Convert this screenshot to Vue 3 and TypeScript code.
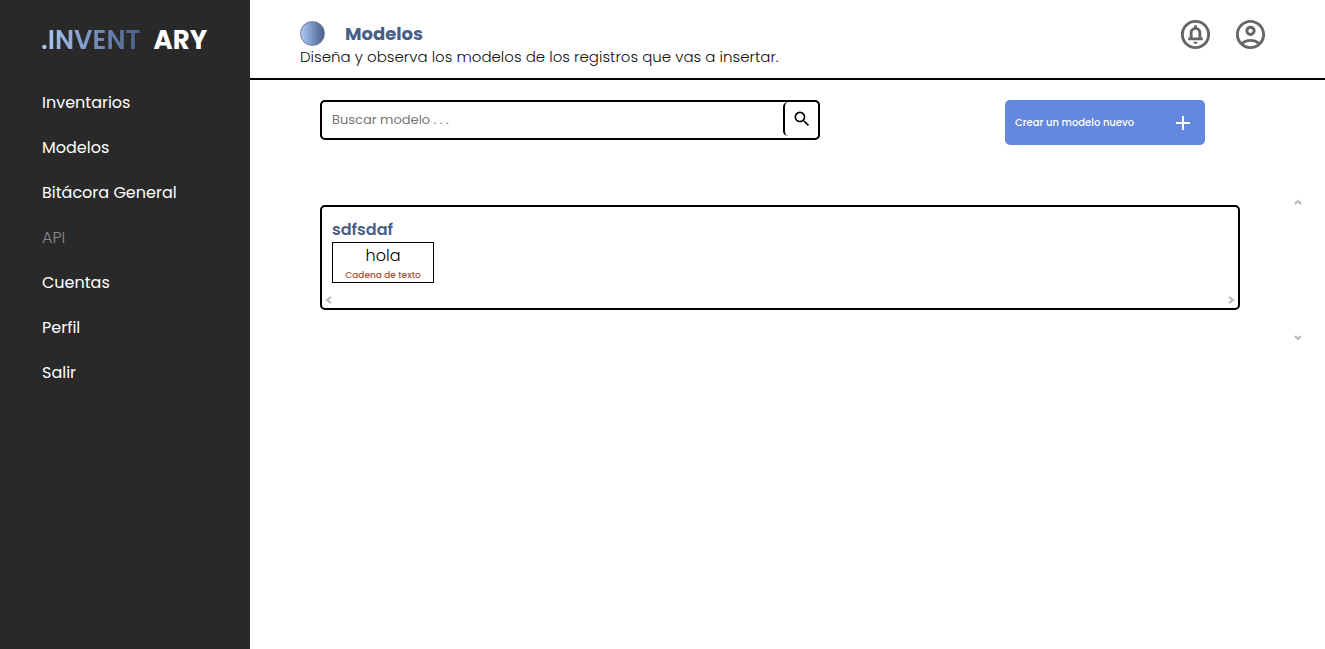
<script setup lang="ts">
import { ref } from 'vue'

interface NavItem {
  label: string
  disabled?: boolean
}

interface Field {
  name: string
  type: string
}

interface Model {
  name: string
  fields: Field[]
}

const navItems: NavItem[] = [
  { label: 'Inventarios' },
  { label: 'Modelos' },
  { label: 'Bitácora General' },
  { label: 'API', disabled: true },
  { label: 'Cuentas' },
  { label: 'Perfil' },
  { label: 'Salir' },
]

const models: Model[] = [
  { name: 'sdfsdaf', fields: [{ name: 'hola', type: 'Cadena de texto' }] },
]

const query = ref('')
</script>

<template>
  <div class="app">
    <aside class="sidebar">
      <div class="brand">
        <span class="brand-main">.INVENT</span>
        <span class="brand-end">ARY</span>
      </div>
      <nav class="nav">
        <a
          v-for="item in navItems"
          :key="item.label"
          href="#"
          class="nav-link"
          :class="{ disabled: item.disabled }"
          :aria-disabled="item.disabled"
        >{{ item.label }}</a>
      </nav>
    </aside>

    <main class="main">
      <header class="header">
        <div class="heading">
          <div class="title-row">
            <span class="dot"></span>
            <h1 class="title">Modelos</h1>
          </div>
          <p class="subtitle">Diseña y observa los modelos de los registros que vas a insertar.</p>
        </div>
        <div class="actions">
          <button class="icon-button" type="button" aria-label="Notificaciones">
            <svg viewBox="0 0 24 24" width="35" height="35">
              <circle cx="12" cy="12" r="9" fill="none" stroke="currentColor" stroke-width="2" />
              <path
                fill="currentColor"
                fill-rule="evenodd"
                d="M12 5.500c-.6 0-1 .4-1 1v.6C9 7.500 8 9 8 11v3H7v2h10v-2h-1v-3c0-2-1-3.500-3-3.900v-.6c0-.6-.4-1-1-1zM10 14v-3c0-1.400.8-2.200 2-2.200s2 .8 2 2.200v3zM10.500 17h3c0 .83-.67 1.500-1.500 1.500s-1.500-.67-1.500-1.500z"
              />
            </svg>
          </button>
          <button class="icon-button" type="button" aria-label="Perfil de usuario">
            <svg viewBox="0 0 24 24" width="35" height="35">
              <path
                fill="currentColor"
                d="M12 2C6.480 2 2 6.480 2 12s4.480 10 10 10 10-4.480 10-10S17.520 2 12 2zM7.350 18.500C8.660 17.560 10.260 17 12 17s3.340.56 4.650 1.500c-1.310.94-2.910 1.500-4.650 1.500s-3.340-.56-4.650-1.500zm10.790-1.380C16.450 15.800 14.320 15 12 15s-4.450.8-6.140 2.120C4.700 15.730 4 13.950 4 12c0-4.420 3.580-8 8-8s8 3.580 8 8c0 1.950-.7 3.730-1.860 5.120zM12 6c-1.930 0-3.500 1.570-3.500 3.500S10.070 13 12 13s3.500-1.570 3.500-3.500S13.930 6 12 6zm0 5c-.83 0-1.500-.67-1.500-1.500S11.170 8 12 8s1.500.67 1.500 1.500S12.830 11 12 11z"
              />
            </svg>
          </button>
        </div>
      </header>

      <div class="toolbar">
        <form class="search" role="search" @submit.prevent>
          <input
            v-model="query"
            class="search-input"
            type="text"
            placeholder="Buscar modelo . . ."
            aria-label="Buscar modelo"
          />
          <button class="search-button" type="submit" aria-label="Buscar">
            <svg viewBox="0 0 24 24" width="20" height="20">
              <path
                fill="currentColor"
                d="M15.500 14h-.79l-.28-.27A6.470 6.470 0 0 0 16 9.500 6.500 6.500 0 1 0 9.500 16c1.610 0 3.090-.59 4.230-1.570l.27.28v.79l5 4.990L20.490 19l-4.990-5zm-6 0C7.010 14 5 11.990 5 9.500S7.010 5 9.500 5 14 7.010 14 9.500 11.990 14 9.500 14z"
              />
            </svg>
          </button>
        </form>
        <button class="create" type="button">
          <span>Crear un modelo nuevo</span>
          <svg viewBox="0 0 24 24" width="24" height="24">
            <path fill="currentColor" d="M19 13h-6v6h-2v-6H5v-2h6V5h2v6h6z" />
          </svg>
        </button>
      </div>

      <section class="list">
        <div class="cards">
          <article v-for="model in models" :key="model.name" class="card">
            <h2 class="card-title">{{ model.name }}</h2>
            <div class="fields">
              <div v-for="field in model.fields" :key="field.name" class="field">
                <span class="field-name">{{ field.name }}</span>
                <span class="field-type">{{ field.type }}</span>
              </div>
            </div>
            <div class="scroll-row">
              <button class="arrow" type="button" aria-label="Desplazar a la izquierda">
                <svg viewBox="0 0 8 8" width="8" height="8"><path d="M7 1 3 4 7 7" /></svg>
              </button>
              <button class="arrow" type="button" aria-label="Desplazar a la derecha">
                <svg viewBox="0 0 8 8" width="8" height="8"><path d="M1 1 5 4 1 7" /></svg>
              </button>
            </div>
          </article>
        </div>
        <div class="scroll-column">
          <button class="arrow" type="button" aria-label="Desplazar hacia arriba">
            <svg viewBox="0 0 8 8" width="8" height="8"><path d="M1 6 4 3 7 6" /></svg>
          </button>
          <button class="arrow" type="button" aria-label="Desplazar hacia abajo">
            <svg viewBox="0 0 8 8" width="8" height="8"><path d="M1 2 4 5 7 2" /></svg>
          </button>
        </div>
      </section>
    </main>
  </div>
</template>

<style>
body {
  margin: 0;
  background: #fff;
}
</style>

<style scoped>
.app {
  display: flex;
  min-height: 100vh;
  font-family: Poppins, Inter, "Open Sans", sans-serif;
  color: #000;
}

.app *,
.app *::before {
  box-sizing: border-box;
}

button,
input {
  margin: 0;
  padding: 0;
  border: 0;
  background: none;
  font-family: inherit;
  color: inherit;
}

button {
  cursor: pointer;
}

svg {
  display: block;
}

.sidebar {
  flex: 0 0 250px;
  background: #292929;
  color: #fff;
}

.brand {
  display: flex;
  gap: 13px;
  height: 80px;
  padding-left: 41px;
  align-items: center;
  font-size: 26px;
  font-weight: 700;
  line-height: 40px;
}

.brand-main {
  font-weight: 600;
  background: linear-gradient(to right, #adc9fa, #475f87);
  background-clip: text;
  -webkit-background-clip: text;
  color: transparent;
}

.nav {
  display: flex;
  flex-direction: column;
}

.nav-link {
  padding-left: 42px;
  font-size: 16px;
  line-height: 45px;
  color: #fff;
  text-decoration: none;
}

.nav-link.disabled {
  font-weight: 300;
  color: #8c8c8c;
}

.main {
  flex: 1;
  min-width: 0;
}

.header {
  display: flex;
  justify-content: space-between;
  height: 80px;
  padding: 17px 57px 0 50px;
  border-bottom: 2px solid #000;
}

.title-row {
  display: flex;
  align-items: center;
  gap: 20px;
  height: 32px;
}

.dot {
  width: 25px;
  height: 25px;
  border: 1px solid #6b7b94;
  border-radius: 50%;
  background: linear-gradient(to right, #adc9fa, #475f87);
}

.title {
  margin: 0;
  font-size: 18px;
  font-weight: 700;
  color: #475f87;
}

.subtitle {
  margin: 0;
  font-size: 15px;
  font-weight: 300;
  line-height: 16px;
  color: #111;
}

.actions {
  display: flex;
  align-items: flex-start;
  gap: 20px;
}

.icon-button {
  color: #666;
}

.toolbar {
  display: flex;
  justify-content: space-between;
  align-items: flex-start;
  gap: 20px;
  padding: 20px 120px 0 70px;
}

.search {
  display: flex;
  flex: 0 1 500px;
  height: 40px;
  border: 2px solid #000;
  border-radius: 5px;
}

.search-input {
  flex: 1;
  min-width: 0;
  padding: 0 10px;
  font-size: 13px;
  outline: 0;
}

.search-input::placeholder {
  color: #757575;
  opacity: 1;
}

.search-button {
  display: flex;
  align-items: center;
  justify-content: center;
  width: 35px;
  height: 34px;
  border-left: 2px solid #000;
  border-radius: 5px;
}

.create {
  display: flex;
  align-items: center;
  justify-content: space-between;
  flex: 0 0 200px;
  height: 45px;
  padding: 0 10px;
  border-radius: 5px;
  background: #6487e0;
  color: #fff;
  font-size: 10px;
  font-weight: 500;
}

.list {
  display: flex;
  margin-top: 50px;
  padding: 0 20px 0 70px;
}

.cards {
  flex: 1;
  padding: 10px 0 35px;
}

.card {
  padding: 10px 0 3px 10px;
  border: 2px solid #000;
  border-radius: 5px;
}

.card-title {
  margin: 0;
  font-size: 16px;
  font-weight: 600;
  line-height: 25px;
  color: #475f87;
}

.fields {
  display: flex;
  gap: 10px;
}

.field {
  display: flex;
  flex-direction: column;
  align-items: center;
  min-width: 102px;
  border: 1px solid #000;
}

.field-name {
  font-size: 16px;
  font-weight: 300;
  line-height: 25px;
}

.field-type {
  font-size: 9px;
  font-weight: 500;
  line-height: 14px;
  color: #a5522d;
}

.scroll-row {
  display: flex;
  justify-content: space-between;
  margin: 13px 2px 1px -8px;
}

.scroll-column {
  display: flex;
  flex-direction: column;
  justify-content: space-between;
  align-items: center;
  width: 15px;
  margin: 3px 0 3px 50px;
}

.arrow path {
  fill: none;
  stroke: #b8b8b8;
  stroke-width: 2;
}
</style>
